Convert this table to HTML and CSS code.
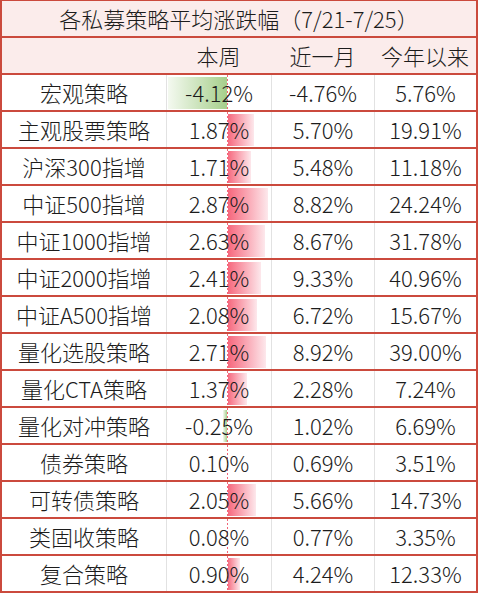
FILE: index.html
```html
<!DOCTYPE html>
<html>
<head>
<title>各私募策略平均涨跌幅</title>
<meta http-equiv="Content-Type" content="text/html; charset=utf-8" />
<link rel="stylesheet" href="styles.css">
</head>
<body>
<div class="sheet">
	<div class="row head">
		<div class="cell title">各私募策略平均涨跌幅（7/21-7/25）</div>
	</div>
	<div class="row head">
		<div class="cell"></div>
		<div class="cell">本周</div>
		<div class="cell">近一月</div>
		<div class="cell">今年以来</div>
	</div>
	<div class="row">
		<div class="cell name">宏观策略</div>
		<div class="cell bar"><span class="neg" style="width:59px"></span><span class="axis"></span><span class="val">-4.12%</span></div>
		<div class="cell line">-4.76%</div>
		<div class="cell line">5.76%</div>
	</div>
	<div class="row">
		<div class="cell name">主观股票策略</div>
		<div class="cell bar"><span class="pos" style="width:27px"></span><span class="axis"></span><span class="val">1.87%</span></div>
		<div class="cell line">5.70%</div>
		<div class="cell line">19.91%</div>
	</div>
	<div class="row">
		<div class="cell name">沪深300指增</div>
		<div class="cell bar"><span class="pos" style="width:24px"></span><span class="axis"></span><span class="val">1.71%</span></div>
		<div class="cell line">5.48%</div>
		<div class="cell line">11.18%</div>
	</div>
	<div class="row">
		<div class="cell name">中证500指增</div>
		<div class="cell bar"><span class="pos" style="width:41px"></span><span class="axis"></span><span class="val">2.87%</span></div>
		<div class="cell line">8.82%</div>
		<div class="cell line">24.24%</div>
	</div>
	<div class="row">
		<div class="cell name">中证1000指增</div>
		<div class="cell bar"><span class="pos" style="width:38px"></span><span class="axis"></span><span class="val">2.63%</span></div>
		<div class="cell line">8.67%</div>
		<div class="cell line">31.78%</div>
	</div>
	<div class="row">
		<div class="cell name">中证2000指增</div>
		<div class="cell bar"><span class="pos" style="width:34px"></span><span class="axis"></span><span class="val">2.41%</span></div>
		<div class="cell line">9.33%</div>
		<div class="cell line">40.96%</div>
	</div>
	<div class="row">
		<div class="cell name">中证A500指增</div>
		<div class="cell bar"><span class="pos" style="width:30px"></span><span class="axis"></span><span class="val">2.08%</span></div>
		<div class="cell line">6.72%</div>
		<div class="cell line">15.67%</div>
	</div>
	<div class="row">
		<div class="cell name">量化选股策略</div>
		<div class="cell bar"><span class="pos" style="width:39px"></span><span class="axis"></span><span class="val">2.71%</span></div>
		<div class="cell line">8.92%</div>
		<div class="cell line">39.00%</div>
	</div>
	<div class="row">
		<div class="cell name">量化CTA策略</div>
		<div class="cell bar"><span class="pos" style="width:20px"></span><span class="axis"></span><span class="val">1.37%</span></div>
		<div class="cell line">2.28%</div>
		<div class="cell line">7.24%</div>
	</div>
	<div class="row">
		<div class="cell name">量化对冲策略</div>
		<div class="cell bar"><span class="neg" style="width:4px"></span><span class="axis"></span><span class="val">-0.25%</span></div>
		<div class="cell line">1.02%</div>
		<div class="cell line">6.69%</div>
	</div>
	<div class="row">
		<div class="cell name">债券策略</div>
		<div class="cell bar"><span class="pos" style="width:1px"></span><span class="axis"></span><span class="val">0.10%</span></div>
		<div class="cell line">0.69%</div>
		<div class="cell line">3.51%</div>
	</div>
	<div class="row">
		<div class="cell name">可转债策略</div>
		<div class="cell bar"><span class="pos" style="width:29px"></span><span class="axis"></span><span class="val">2.05%</span></div>
		<div class="cell line">5.66%</div>
		<div class="cell line">14.73%</div>
	</div>
	<div class="row">
		<div class="cell name">类固收策略</div>
		<div class="cell bar"><span class="pos" style="width:1px"></span><span class="axis"></span><span class="val">0.08%</span></div>
		<div class="cell line">0.77%</div>
		<div class="cell line">3.35%</div>
	</div>
	<div class="row">
		<div class="cell name">复合策略</div>
		<div class="cell bar"><span class="pos" style="width:13px"></span><span class="axis"></span><span class="val">0.90%</span></div>
		<div class="cell line">4.24%</div>
		<div class="cell line">12.33%</div>
	</div>
</div>
</body>
</html>
```

FILE: styles.css
```css
body {
	margin: 0;
	background: #ffffff;
	font-family: "Noto Sans CJK SC", "Noto Sans", sans-serif;
	font-size: 22px;
	font-weight: 300;
	color: #1c1c1c;
}
.sheet {
	width: 478px;
	box-sizing: border-box;
	border-left: solid #cb4a3d 2px;
	border-right: solid #cb4a3d 2px;
	border-top: solid #cb4a3d 1px;
}
.row {
	display: grid;
	grid-template-columns: 164px 105px 103px 102px;
	height: 35px;
	border-bottom: solid #cb4a3d 2px;
}
.row.head {
	background-color: #fbeceb;
}
.cell {
	position: relative;
	display: flex;
	align-items: center;
	justify-content: center;
	white-space: nowrap;
	line-height: 35px;
}
.cell.title {
	grid-column: 1 / 5;
}
.cell.line, .cell.bar {
	border-left: solid #e2e2e2 1px;
}
/* data bars, axis sits at 60px inside the cell */
.bar .neg, .bar .pos {
	position: absolute;
	top: 2px;
	bottom: 1px;
}
.bar .neg {
	right: 44px;
	background: linear-gradient(to right, #f4f9f0, #a6cf8b);
}
.bar .pos {
	left: 60px;
	background: linear-gradient(to right, #f6647a, #fde8ec);
}
.bar .axis {
	position: absolute;
	top: 0;
	bottom: 0;
	left: 60px;
	width: 1px;
	background: repeating-linear-gradient(to bottom, #f26476 0 2px, #ffffff 2px 4px);
}
.bar .val {
	position: relative;
}
```
